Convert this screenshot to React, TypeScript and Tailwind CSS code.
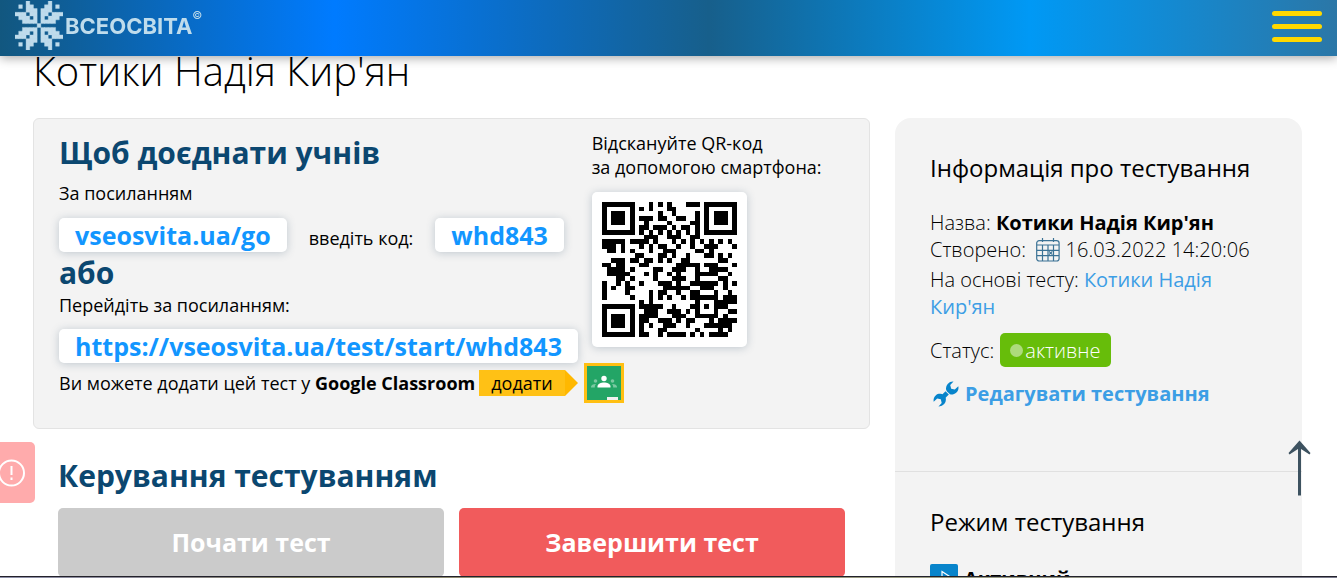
import React from "react";

const QR_SIZE = 29;
const DATA_WORDS = 55;
const EC_WORDS = 15;
const FORMAT_BITS = 0b111110110101010;

function gfMultiply(a: number, b: number): number {
  let result = 0;
  for (let i = 7; i >= 0; i--) {
    result = (result << 1) ^ ((result >>> 7) * 0x11d);
    result ^= ((b >>> i) & 1) * a;
  }
  return result;
}

function errorCorrection(data: number[]): number[] {
  const divisor: number[] = new Array(EC_WORDS).fill(0);
  divisor[EC_WORDS - 1] = 1;
  let root = 1;
  for (let i = 0; i < EC_WORDS; i++) {
    for (let j = 0; j < EC_WORDS; j++) {
      divisor[j] = gfMultiply(divisor[j], root);
      if (j + 1 < EC_WORDS) divisor[j] ^= divisor[j + 1];
    }
    root = gfMultiply(root, 2);
  }
  const rest: number[] = new Array(EC_WORDS).fill(0);
  for (const byte of data) {
    const factor = byte ^ (rest.shift() as number);
    rest.push(0);
    divisor.forEach((c, i) => (rest[i] ^= gfMultiply(c, factor)));
  }
  return rest;
}

// QR code version 3, level L, mask 2 (every third column inverted).
function encodeQr(text: string): boolean[][] {
  const bits: number[] = [];
  const push = (value: number, count: number) => {
    for (let i = count - 1; i >= 0; i--) bits.push((value >>> i) & 1);
  };
  push(4, 4);
  push(text.length, 8);
  for (const ch of text) push(ch.charCodeAt(0), 8);
  push(0, 4);
  const words: number[] = [];
  for (let i = 0; i < bits.length; i += 8) {
    words.push(parseInt(bits.slice(i, i + 8).join(""), 2));
  }
  for (let pad = 0xec; words.length < DATA_WORDS; pad ^= 0xec ^ 0x11) words.push(pad);
  const all = words.concat(errorCorrection(words));

  const grid = Array.from({ length: QR_SIZE }, () => new Array<boolean>(QR_SIZE).fill(false));
  const used = Array.from({ length: QR_SIZE }, () => new Array<boolean>(QR_SIZE).fill(false));
  const set = (x: number, y: number, dark: boolean) => {
    if (x < 0 || y < 0 || x >= QR_SIZE || y >= QR_SIZE) return;
    grid[y][x] = dark;
    used[y][x] = true;
  };
  for (let i = 0; i < QR_SIZE; i++) {
    set(6, i, i % 2 === 0);
    set(i, 6, i % 2 === 0);
  }
  for (const [cx, cy] of [[3, 3], [QR_SIZE - 4, 3], [3, QR_SIZE - 4]]) {
    for (let dy = -4; dy <= 4; dy++)
      for (let dx = -4; dx <= 4; dx++) {
        const d = Math.max(Math.abs(dx), Math.abs(dy));
        set(cx + dx, cy + dy, d !== 2 && d !== 4);
      }
  }
  for (let dy = -2; dy <= 2; dy++)
    for (let dx = -2; dx <= 2; dx++) set(22 + dx, 22 + dy, Math.max(Math.abs(dx), Math.abs(dy)) !== 1);

  const f = (i: number) => ((FORMAT_BITS >>> i) & 1) === 1;
  for (let i = 0; i <= 5; i++) set(8, i, f(i));
  set(8, 7, f(6));
  set(8, 8, f(7));
  set(7, 8, f(8));
  for (let i = 9; i < 15; i++) set(14 - i, 8, f(i));
  for (let i = 0; i < 8; i++) set(QR_SIZE - 1 - i, 8, f(i));
  for (let i = 8; i < 15; i++) set(8, QR_SIZE - 15 + i, f(i));
  set(8, QR_SIZE - 8, true);

  let n = 0;
  for (let right = QR_SIZE - 1; right >= 1; right -= 2) {
    if (right === 6) right = 5;
    for (let v = 0; v < QR_SIZE; v++)
      for (let j = 0; j < 2; j++) {
        const x = right - j;
        const up = ((right + 1) & 2) === 0;
        const y = up ? QR_SIZE - 1 - v : v;
        if (used[y][x]) continue;
        const bit = n < all.length * 8 ? ((all[n >>> 3] >>> (7 - (n & 7))) & 1) === 1 : false;
        n++;
        grid[y][x] = bit !== (x % 3 === 0);
      }
  }
  return grid;
}

function QrCode({ value }: { value: string }) {
  const path = encodeQr(value)
    .flatMap((row, y) => row.map((dark, x) => (dark ? `M${x} ${y}h1v1h-1z` : "")))
    .join("");
  return (
    <svg viewBox="0 0 29 29" className="size-full" role="img" aria-label="QR-код" shapeRendering="crispEdges">
      <path d={path} fill="#000" />
    </svg>
  );
}

function Snowflake() {
  const cells = [[1, 1], [3, 0], [3, 1], [3, 2], [4, 1], [4, 2], [4, 3], [5, 2], [5, 3], [5, 4], [5, 5], [0, 3], [1, 3], [2, 3], [1, 4], [2, 4], [3, 4], [2, 5], [3, 5], [4, 5]];
  const d = cells
    .flatMap(([x, y]) => [[x, y], [12 - x, y], [x, 12 - y], [12 - x, 12 - y]])
    .concat([[6, 6]])
    .map(([x, y]) => `M${x} ${y}h1v1h-1z`)
    .join("");
  return (
    <svg viewBox="0 0 13 13" className="h-[49px] w-12" preserveAspectRatio="none" aria-hidden="true">
      <path d={d} fill="#bfdcec" stroke="#bfdcec" strokeWidth="0.1" />
    </svg>
  );
}

function CalendarIcon() {
  return (
    <svg viewBox="0 0 24 24" className="size-6" fill="none" stroke="#3b7295" strokeWidth="1.2" aria-hidden="true">
      <rect x="0.7" y="2.6" width="22.4" height="20.4" rx="2.5" />
      <path d="M6.5 0v4M17.5 0v4M1 7h22M1 12.4h22M1 17.6h22M6.5 7v16M12 7v16M17.5 7v16" />
      <path d="M13 13.4l3.4 3.2M16.4 13.4L13 16.6" />
    </svg>
  );
}

function WrenchIcon() {
  return (
    <svg viewBox="0 0 26 26" className="size-[26px]" fill="#0784cb" aria-hidden="true">
      <path d="M20.500 .5A7 7 0 0 0 13.200 9.100L14 10.500 17 13.200A6.700 6.700 0 0 0 25.300 5.200L21.800 8.600 18.200 7.700 17.200 4.100Z" />
      <path d="M12.500 10.300L15.800 13.500 11.800 17.500 8.500 14.200Z" />
      <path d="M5.500 25.500A7 7 0 0 0 12.700 17L11.800 15.400 9 12.900A6.700 6.700 0 0 0 .700 20.700L4.200 17.500 7.800 18.300 8.700 21.900Z" />
    </svg>
  );
}

function ClassroomIcon() {
  return (
    <svg viewBox="0 0 40 40" className="size-10" aria-hidden="true">
      <rect width="40" height="40" fill="#ffbf12" />
      <rect x="3" y="3" width="34" height="34" fill="#23a566" />
      <circle cx="20" cy="15.500" r="2.700" fill="#fff" />
      <path d="M13.500 24.500v-1c0-2.600 3.500-4 6.500-4s6.500 1.400 6.500 4v1z" fill="#fff" />
      <g fill="#7bc9a2">
        <circle cx="11.500" cy="18" r="1.800" />
        <circle cx="28.500" cy="18" r="1.800" />
        <path d="M7 24.500v-.8c0-1.800 2.300-2.900 5-2.800-.9.800-1.200 1.700-1.200 3.600zM33 24.500v-.8c0-1.800-2.300-2.900-5-2.800.9.800 1.200 1.700 1.200 3.600z" />
      </g>
      <rect x="23" y="34" width="11" height="3" fill="#f1f1f1" />
    </svg>
  );
}

function Header() {
  return (
    <header className="fixed inset-x-0 top-0 z-20 flex h-14 items-start justify-between bg-[linear-gradient(90deg,#12577f_0%,#007bff_25%,#175f8b_53%,#0099f5_77%,#2b77a7_100%)] shadow-[0_2px_10px_rgba(0,0,0,0.35)]">
      <a href="#" className="flex items-start pl-[15px] pt-px text-[#bfdcec]">
        <Snowflake />
        <span className="ml-0.5 pt-2.5 font-['Inter'] text-[22px] leading-[30px] font-bold">ВСЕОСВІТА</span>
        <span className="pt-1 font-['Inter'] text-[11px] leading-5">©</span>
      </a>
      <button type="button" aria-label="Меню" className="mt-[11px] mr-[15px] flex w-[50px] flex-col gap-2">
        <span className="h-[5px] rounded-full bg-[#ffd800]" />
        <span className="h-[5px] rounded-full bg-[#ffd800]" />
        <span className="h-[5px] rounded-full bg-[#ffd800]" />
      </button>
    </header>
  );
}

const chip = "flex h-[34px] items-center rounded-[5px] bg-white px-4 text-[25px] font-bold text-[#1296ff] shadow-[0_1px_8px_rgba(40,70,100,0.25)]";

function JoinPanel() {
  return (
    <section className="flex items-start rounded-md border border-[#e3e3e3] bg-[#f3f3f3] pt-3 pb-[25px] pl-[25px] text-lg leading-6">
      <div className="pt-0.5">
        <h2 className="text-3xl leading-10 font-bold text-[#0b4770]">Щоб доєднати учнів</h2>
        <p className="mt-2">За посиланням</p>
        <div className="mt-[13px] flex items-center">
          <a href="#" className={chip}>vseosvita.ua/go</a>
          <span className="mx-[22px] pt-1.5">введіть код:</span>
          <span className={chip}>whd843</span>
        </div>
        <h2 className="mt-px text-3xl leading-10 font-bold text-[#0b4770]">або</h2>
        <p>Перейдіть за посиланням:</p>
        <div className="mt-3 flex">
          <a href="#" className={chip}>https://vseosvita.ua/test/start/whd843</a>
        </div>
        <div className="flex items-center">
          <p>Ви можете додати цей тест у <b className="font-bold">Google Classroom</b></p>
          <a href="#" className="ml-1 flex items-center">
            <span className="flex h-[26px] items-center bg-[#ffc115] px-3">додати</span>
            <svg viewBox="0 0 13 26" className="h-[26px] w-[13px]" aria-hidden="true"><path d="M0 0l13 13L0 26z" fill="#ffb800" /></svg>
          </a>
          <a href="#" aria-label="Google Classroom" className="ml-1.5"><ClassroomIcon /></a>
        </div>
      </div>
      <div className="-ml-8">
        <p>Відскануйте QR-код<br />за допомогою смартфона:</p>
        <div className="mt-[13px] size-[155px] rounded-[5px] bg-white p-2.5 shadow-[0_1px_8px_rgba(40,70,100,0.25)]">
          <QrCode value="https://vseosvita.ua/test/start/whd843" />
        </div>
      </div>
    </section>
  );
}

function Controls() {
  return (
    <section className="px-[25px] pt-[27px]">
      <h2 className="text-3xl leading-10 font-bold text-[#0b4770]">Керування тестуванням</h2>
      <div className="mt-3 grid grid-cols-2 gap-[15px] text-[25px] font-bold text-white">
        <button type="button" className="h-[69px] rounded-[5px] bg-[#cbcbcb]">Почати тест</button>
        <button type="button" className="h-[69px] rounded-[5px] bg-[#f15b5c]">Завершити тест</button>
      </div>
    </section>
  );
}

function Sidebar() {
  return (
    <aside className="rounded-t-2xl bg-[#f3f3f3] text-xl leading-[27px] font-light">
      <div className="h-[354px] border-b border-[#e0e0e0] px-[35px] pt-[34px]">
        <h3 className="text-2xl leading-8 font-normal">Інформація про тестування</h3>
        <p className="mt-[25px]">Назва: <b className="font-bold">Котики Надія Кир'ян</b></p>
        <p className="flex items-center whitespace-pre">Створено:  <CalendarIcon /> 16.03.2022 14:20:06</p>
        <p className="mt-[3px]">На основі тесту: <a href="#" className="font-normal text-[#3c9ee5]">Котики Надія Кир'ян</a></p>
        <p className="mt-[13px] flex items-center gap-1.5">
          Статус:
          <span className="flex h-[34px] items-center rounded-[5px] bg-[#67bd0a] px-2.5 text-white">
            <span className="mr-0.5 size-[13px] rounded-full bg-[#addb7c]" />активне
          </span>
        </p>
        <a href="#" className="mt-[13px] flex items-center gap-1.5 pl-[3px] font-bold text-[#3c9ee5]"><WrenchIcon />Редагувати тестування</a>
      </div>
      <div className="px-[35px] pt-[34px]">
        <h3 className="text-2xl leading-8 font-normal">Режим тестування</h3>
        <p className="mt-[26px] flex items-center gap-1.5 font-bold">
          <svg viewBox="0 0 28 28" className="size-7" aria-hidden="true">
            <rect width="28" height="28" rx="2" fill="#0784cb" />
            <path d="M12 7.500l10 6.500-10 6.500z" fill="none" stroke="#fff" strokeWidth="1.200" />
          </svg>
          Активний
        </p>
      </div>
    </aside>
  );
}

export default function App() {
  return (
    <div className="h-screen overflow-hidden bg-white font-['Open_Sans','Noto_Sans',sans-serif] text-black">
      <Header />
      <main className="pt-[46px] pr-[35px] pl-[33px]">
        <h1 className="text-[40px] leading-[50px] font-light">Котики Надія Кир'ян</h1>
        <div className="mt-[22px] grid grid-cols-[837fr_407fr] gap-[25px]">
          <div>
            <JoinPanel />
            <Controls />
          </div>
          <Sidebar />
        </div>
      </main>
      <button type="button" aria-label="Повідомити про помилку" className="fixed top-[442px] left-0 flex h-[61px] w-[35px] items-center rounded-r-[5px] bg-[#ffabac]">
        <svg viewBox="0 0 27 28" className="-ml-0.5 h-7 w-[27px] shrink-0" fill="none" stroke="#fff" strokeWidth="2" aria-hidden="true">
          <circle cx="13.500" cy="14" r="12.500" />
          <path d="M13.500 7v9M13.500 18.500v2.500" />
        </svg>
      </button>
      <a href="#" aria-label="Вгору" className="fixed right-[26px] bottom-[82px]">
        <svg viewBox="0 0 23 56" className="h-14 w-[23px]" aria-hidden="true">
          <path d="M11.500 8v47.500" stroke="#3d5260" strokeWidth="3" />
          <path d="M11.500 .5L22.500 13l-1 1.500L11.500 8 1.500 14.500.5 13z" fill="#3d5260" />
        </svg>
      </a>
      <div className="fixed inset-x-0 bottom-0 z-30 h-0.5 border-t border-[#22212b] bg-[linear-gradient(90deg,#8d8fa8_0%,#8d8a94_12%,#7c7a5c_22%,#8f8c72_35%,#9a9d84_75%,#77778a_100%)]" />
    </div>
  );
}
